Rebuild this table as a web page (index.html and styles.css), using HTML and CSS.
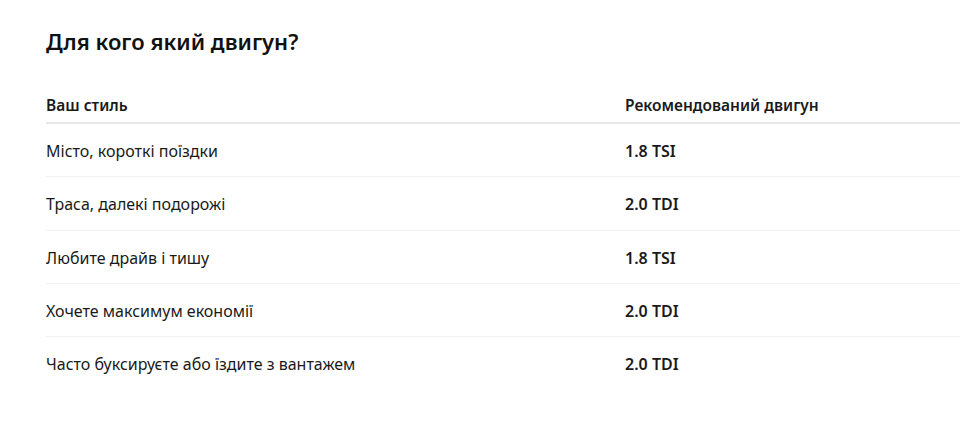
FILE: index.html
```html
<!DOCTYPE html>
<html lang="uk">
<head>
<meta charset="utf-8">
<link rel="stylesheet" href="styles.css">
</head>
<body>
<section class="block">
  <h2 class="title">Для кого який двигун?</h2>
  <table class="engines">
    <thead>
      <tr><th class="c1">Ваш стиль</th><th>Рекомендований двигун</th></tr>
    </thead>
    <tbody>
      <tr><td>Місто, короткі поїздки</td><td class="eng">1.8 TSI</td></tr>
      <tr><td>Траса, далекі подорожі</td><td class="eng">2.0 TDI</td></tr>
      <tr><td>Любите драйв і тишу</td><td class="eng">1.8 TSI</td></tr>
      <tr><td>Хочете максимум економії</td><td class="eng">2.0 TDI</td></tr>
      <tr><td>Часто буксируєте або їздите з вантажем</td><td class="eng">2.0 TDI</td></tr>
    </tbody>
  </table>
</section>
</body>
</html>
```
FILE: styles.css
```css
html, body { margin: 0; padding: 0; background: #fff; }
body {
  font-family: "Noto Sans", "Open Sans", sans-serif;
  color: #1a1a1a;
}
.block { padding: 25px 11px 0 46px; }
.title {
  margin: 0 0 38px;
  font-size: 22px;
  line-height: 32px;
  font-weight: 600;
  color: #111;
}
.engines {
  width: 914px;
  border-collapse: collapse;
}
.engines th {
  text-align: left;
  font-size: 15.5px;
  font-weight: 600;
  padding: 0 0 7px;
  line-height: 20px;
  border-bottom: 2px solid #e8e8e8;
}
.engines th.c1 { width: 579px; }
.engines td {
  font-size: 16px;
  line-height: 22px;
  padding: 16px 0 14.35px;
  border-bottom: 1px solid #f2f2f2;
}
.engines tbody tr:last-child td { border-bottom: none; }
.engines td.eng { font-weight: 600; }
```
